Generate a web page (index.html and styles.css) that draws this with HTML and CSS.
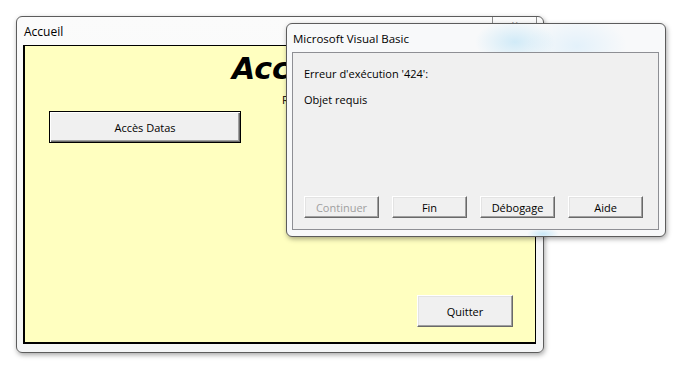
FILE: index.html
```html
<!DOCTYPE html>
<html lang="fr">
<head>
  <meta charset="UTF-8">
  <title>Accueil</title>
  <link rel="stylesheet" href="styles.css">
</head>
<body>

  <div class="desktop">

    <div class="window main-window">
      <div class="titlebar">
        <span class="title">Accueil</span>
        <span class="close-btn">✕</span>
      </div>
      <div class="form">
        <h1 class="form-title">Accueil</h1>
        <p class="form-subtitle">Réalisé par</p>
        <button class="vb-btn default-btn">Accès Datas</button>
        <button class="vb-btn quit-btn">Quitter</button>
      </div>
    </div>

    <div class="window msg-box">
      <div class="titlebar">
        <span class="title">Microsoft Visual Basic</span>
      </div>
      <div class="msg-panel">
        <p class="msg-line">Erreur d'exécution '424':</p>
        <p class="msg-line">Objet requis</p>
        <div class="msg-actions">
          <button class="vb-btn" disabled>Continuer</button>
          <button class="vb-btn">Fin</button>
          <button class="vb-btn">Débogage</button>
          <button class="vb-btn">Aide</button>
        </div>
      </div>
    </div>

  </div>

</body>
</html>
```

FILE: styles.css
```css
body {
  margin: 0;
  background: #fff;
  font-family: 'Open Sans', 'Liberation Sans', sans-serif;
  color: #000;
}

.desktop {
  position: relative;
  width: 691px;
  height: 389px;
  overflow: hidden;
}

/* window frames */
.window {
  position: absolute;
  box-sizing: border-box;
  display: flex;
  flex-direction: column;
  border: 1px solid #5c5c5c;
  border-radius: 6px;
  background: #f9fafb;
  box-shadow: 1px 2px 5px rgba(0,0,0,0.35);
}

.titlebar {
  height: 28px;
  display: flex;
  align-items: center;
  flex-shrink: 0;
}

.title {
  font-size: 12px;
}

.main-window {
  left: 16px;
  top: 16px;
  width: 528px;
  height: 337px;
  background: linear-gradient(180deg, #fbfbfb, #f4f5f6);
}

.main-window .titlebar {
  padding-left: 7px;
}

.close-btn {
  align-self: flex-start;
  margin-left: auto;
  margin-right: 6px;
  width: 45px;
  height: 18px;
  box-sizing: border-box;
  border: 1px solid #8c8c8c;
  border-top: none;
  border-radius: 0 0 4px 4px;
  font-size: 9px;
  color: #7a7a7a;
  text-align: center;
  line-height: 16px;
}

/* the userform */
.form {
  flex: 1;
  display: flex;
  flex-direction: column;
  align-items: flex-start;
  margin: 0 7px 8px 6px;
  border: 1px solid #000;
  border-left-width: 2px;
  border-bottom-width: 2px;
  background: #ffffc0;
}

.form-title {
  margin: 5px 0 0 207px;
  font-family: 'DejaVu Sans', sans-serif;
  font-size: 30px;
  font-style: italic;
  font-weight: bold;
  line-height: 36px;
}

.form-subtitle {
  margin: 5px 0 0 257px;
  font-size: 11px;
  line-height: 16px;
}

/* classic VBA command buttons */
.vb-btn {
  box-sizing: border-box;
  font-family: 'Open Sans', 'Liberation Sans', sans-serif;
  font-size: 11px;
  color: #000;
  background: #f0f0f0;
  border: 1px solid;
  border-color: #fff #696969 #696969 #fff;
  box-shadow: inset -1px -1px #a0a0a0, inset 1px 1px #e3e3e3;
  padding: 0;
}

.vb-btn:disabled {
  color: #a0a0a0;
}

.default-btn {
  width: 192px;
  height: 32px;
  margin: 3px 0 0 24px;
  border: 1px solid #000;
  box-shadow: inset 1px 1px #fff, inset -1px -1px #696969, inset -2px -2px #a0a0a0;
}

.quit-btn {
  width: 96px;
  height: 32px;
  margin: auto 22px 15px 0;
  align-self: flex-end;
}

/* error dialog */
.msg-box {
  left: 286px;
  top: 23px;
  width: 380px;
  height: 214px;
  background:
    radial-gradient(ellipse 40px 22px at 228px 18px, rgba(170,220,245,0.5), rgba(170,220,245,0)),
    radial-gradient(ellipse 50px 30px at 290px 22px, rgba(225,240,250,0.9), rgba(225,240,250,0)),
    radial-gradient(ellipse 16px 6px at 256px 210px, rgba(170,220,245,0.6), rgba(170,220,245,0)),
    #f8f9fa;
}

.msg-box .titlebar {
  padding-left: 6px;
}

.msg-box .title {
  font-size: 11.5px;
}

.msg-panel {
  flex: 1;
  display: flex;
  flex-direction: column;
  margin: 0 6px 6px 5px;
  padding: 13px 11px 11px;
  border: 1px solid #8e8f94;
  background: #f0f0f0;
}

.msg-line {
  margin: 0 0 10px;
  font-size: 11px;
  line-height: 16px;
}

.msg-actions {
  margin-top: auto;
  display: flex;
  gap: 13px;
}

.msg-actions .vb-btn {
  width: 75px;
  height: 22px;
}
```
